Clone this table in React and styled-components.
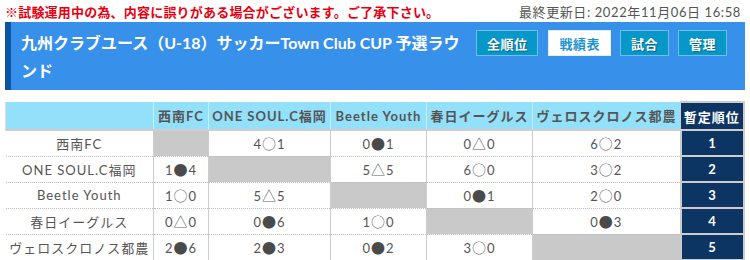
import React from 'react';
import styled, { createGlobalStyle } from 'styled-components';

const fontStack = `Lato, "Noto Sans CJK JP", sans-serif`;

const GlobalStyle = createGlobalStyle`
  html, body {
    margin: 0;
    padding: 0;
    background: #fff;
  }
  body {
    font-family: ${fontStack};
  }
`;

const Page = styled.div`
  width: 750px;
  padding: 0 5px;
  box-sizing: border-box;
`;

const TopBar = styled.div`
  display: flex;
  justify-content: space-between;
  align-items: center;
  height: 22px;
`;

const Notice = styled.div`
  color: #e60012;
  font-size: 13px;
  font-weight: 700;
  letter-spacing: 0.2px;
`;

const Updated = styled.div`
  color: #555;
  font-size: 13px;
  letter-spacing: 0.6px;
  padding-right: 4px;
`;

const Banner = styled.div`
  display: flex;
  align-items: flex-start;
  background: #3790ea;
  border-left: 6px solid #0b56a2;
  height: 68px;
  box-sizing: border-box;
  padding: 7px 18px 5px 10px;
  gap: 6px;
`;

const Title = styled.h1`
  flex: 1;
  margin: 0;
  color: #fff;
  font-size: 16px;
  font-weight: 700;
  line-height: 28px;
  letter-spacing: 0;
`;

const Tabs = styled.div`
  display: flex;
  flex-shrink: 0;
  gap: 9px;
  margin-top: 1px;
`;

const Tab = styled.div`
  height: 26px;
  box-sizing: border-box;
  padding: 0 10px;
  display: flex;
  align-items: center;
  white-space: nowrap;
  font-size: 13px;
  font-weight: 700;
  letter-spacing: 0.5px;
  border: 1px solid ${p => (p.$active ? '#e0f0fb' : '#6cc0e6')};
  background: ${p => (p.$active ? '#fff' : '#0897c9')};
  color: ${p => (p.$active ? '#1f93cf' : '#fff')};
  text-shadow: ${p => (p.$active ? 'none' : '1px 1px 1px rgba(0,0,0,0.35)')};
  &:first-child {
    margin-right: 1px;
  }
`;

const Table = styled.table`
  margin-top: 11px;
  width: 738px;
  table-layout: fixed;
  border-collapse: collapse;
  font-size: 13px;
  letter-spacing: 1px;
  color: #555;
`;

const Head = styled.th`
  height: 26px;
  padding: 0;
  background: ${p => (p.$rank ? '#0d3563' : '#93e0fa')};
  color: ${p => (p.$rank ? '#fff' : '#555')};
  font-weight: 700;
  border-left: 1px solid ${p => (p.$rank ? '#ccc' : '#c9eefb')};
  border-right: ${p => (p.$rank ? '2px solid #ccc' : 'none')};
  border-top: ${p => (p.$rank ? '2px solid #ccc' : 'none')};
  border-bottom: 2px solid #d2cccc;
  white-space: nowrap;
  &:first-child {
    border-left: 1px solid #ddd;
  }
`;

const Row = styled.tr`
  border-bottom: 1px dotted #bbb;
`;

const Cell = styled.td`
  height: 24px;
  padding: 0;
  text-align: center;
  white-space: nowrap;
  border-left: 1px solid #ccc;
  background: ${p => (p.$self ? '#c9c9c9' : '#fff')};
  &:first-child {
    border-left: none;
  }
`;

const Mark = styled.span`
  font-family: "Noto Sans CJK JP", sans-serif;
  font-size: 14px;
  letter-spacing: 0;
  margin-right: 1px;
  color: ${p => (p.$loss ? '#4a4a4a' : '#666')};
`;

const RankCell = styled.td`
  height: 24px;
  padding: 0;
  text-align: center;
  background: #0d3563;
  color: #fff;
  font-weight: 700;
  letter-spacing: 0;
  border: 2px solid #ccc;
  border-top: none;
`;

const teams = ['西南FC', 'ONE SOUL.C福岡', 'Beetle Youth', '春日イーグルス', 'ヴェロスクロノス都農'];
const widths = [148, 55, 122, 96, 106, 148, 63];

const results = [
  [null, '4○1', '0●1', '0△0', '6○2'],
  ['1●4', null, '5△5', '6○0', '3○2'],
  ['1○0', '5△5', null, '0●1', '2○0'],
  ['0△0', '0●6', '1○0', null, '0●3'],
  ['2●6', '2●3', '0●2', '3○0', null],
];

const Score = ({ value }) => {
  const [a, mark, b] = [...value];
  return (
    <>
      {a}
      <Mark $loss={mark === '●'}>{mark}</Mark>
      {b}
    </>
  );
};

export default function App() {
  return (
    <Page>
      <GlobalStyle />
      <TopBar>
        <Notice>※試験運用中の為、内容に誤りがある場合がございます。ご了承下さい。</Notice>
        <Updated>最終更新日: 2022年11月06日 16:58</Updated>
      </TopBar>

      <Banner>
        <Title>九州クラブユース（U-18）サッカーTown Club CUP 予選ラウンド</Title>
        <Tabs>
          <Tab>全順位</Tab>
          <Tab $active>戦績表</Tab>
          <Tab>試合</Tab>
          <Tab>管理</Tab>
        </Tabs>
      </Banner>

      <Table>
        <colgroup>
          {widths.map((w, i) => <col key={i} style={{ width: w }} />)}
        </colgroup>
        <thead>
          <tr>
            <Head />
            {teams.map(t => <Head key={t}>{t}</Head>)}
            <Head $rank>暫定順位</Head>
          </tr>
        </thead>
        <tbody>
          {teams.map((t, i) => (
            <Row key={t}>
              <Cell>{t}</Cell>
              {results[i].map((r, j) => (
                <Cell key={j} $self={r === null}>{r && <Score value={r} />}</Cell>
              ))}
              <RankCell>{i + 1}</RankCell>
            </Row>
          ))}
        </tbody>
      </Table>
    </Page>
  );
}
